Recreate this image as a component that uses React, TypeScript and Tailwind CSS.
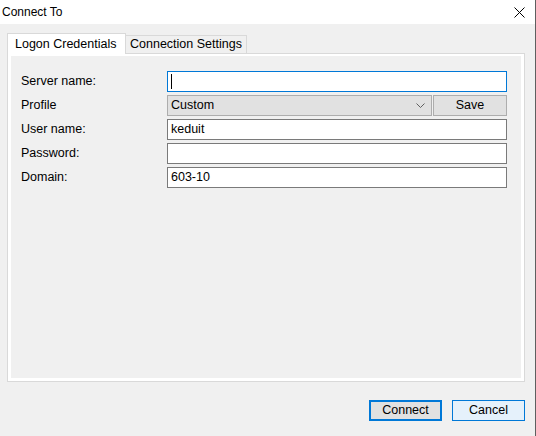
import React from 'react';

const font = { fontFamily: '"Liberation Sans", Arial, sans-serif' };

function Field({ value, focused }: { value?: string; focused?: boolean }) {
  return (
    <div
      className={
        'h-[21px] bg-white flex items-center px-[3px] text-[12.5px] text-black ' +
        (focused ? 'border border-[#0078d7]' : 'border border-[#7a7a7a]')
      }
    >
      {focused && <span className="w-px h-[15px] bg-black" />}
      {value}
    </div>
  );
}

export default function App() {
  const labels = ['Server name:', 'Profile', 'User name:', 'Password:', 'Domain:'];

  return (
    <div className="w-[536px] h-[436px] flex bg-[#f0f0f0] text-black" style={font}>
      <div className="flex-1 flex flex-col">
        {/* title bar */}
        <div className="h-[24px] bg-white flex items-center justify-between pl-[2px] pr-[10px]">
          <span className="text-[12px]">Connect To</span>
          <svg width="11" height="11" viewBox="0 0 11 11">
            <path d="M0.5 0.5 L10.5 10.5 M10.5 0.5 L0.5 10.5" stroke="#000" strokeWidth="1" />
          </svg>
        </div>

        <div className="flex-1 flex flex-col pt-[9px] pl-[7px] pr-[10px]">
          {/* tabs */}
          <div className="flex items-end h-[20px] text-[12.5px]">
            <div className="relative z-10 -mb-px h-[21px] w-[119px] bg-white border-t border-l border-r border-[#d9d9d9] flex items-center pl-[7px]">
              Logon Credentials
            </div>
            <div className="-ml-px h-[18px] w-[122px] bg-[#f0f0f0] border-t border-l border-r border-[#d9d9d9] flex items-center pl-[4px]">
              Connection Settings
            </div>
          </div>

          {/* tab page */}
          <div className="h-[329px] border border-[#d9d9d9] bg-white pt-[2px] px-[3px] pb-[3px] flex">
            <div className="flex-1 bg-[#f0f0f0] pt-[15px] pl-[10px] pr-[14px]">
              <div className="grid grid-cols-[146px_1fr] gap-y-[3px] text-[12.5px]">
                {labels.map((l, i) => (
                  <React.Fragment key={l}>
                    <div className="h-[21px] flex items-center">{l}</div>
                    {i === 0 && <Field focused />}
                    {i === 1 && (
                      <div className="flex gap-px">
                        <div className="flex-1 h-[21px] bg-[#e1e1e1] border border-[#adadad] flex items-center justify-between pl-[3px] pr-[6px]">
                          <span>Custom</span>
                          <svg width="9" height="6" viewBox="0 0 9 6">
                            <path d="M0.5 0.5 L4.5 4.5 L8.5 0.5" fill="none" stroke="#606060" strokeWidth="1" />
                          </svg>
                        </div>
                        <div className="w-[74px] h-[21px] bg-[#e1e1e1] border border-[#adadad] flex items-center justify-center">
                          Save
                        </div>
                      </div>
                    )}
                    {i === 2 && <Field value="keduit" />}
                    {i === 3 && <Field />}
                    {i === 4 && <Field value="603-10" />}
                  </React.Fragment>
                ))}
              </div>
            </div>
          </div>

          {/* buttons */}
          <div className="flex justify-end gap-[10px] mt-[18px] text-[12.5px]">
            <div className="w-[73px] h-[21px] bg-[#e1e1e1] border-2 border-[#0078d7] flex items-center justify-center">
              Connect
            </div>
            <div className="w-[73px] h-[21px] bg-[#e5f1fb] border border-[#0078d7] flex items-center justify-center">
              Cancel
            </div>
          </div>
        </div>
      </div>
      <div className="w-px bg-[#5f5f5f]" />
    </div>
  );
}
